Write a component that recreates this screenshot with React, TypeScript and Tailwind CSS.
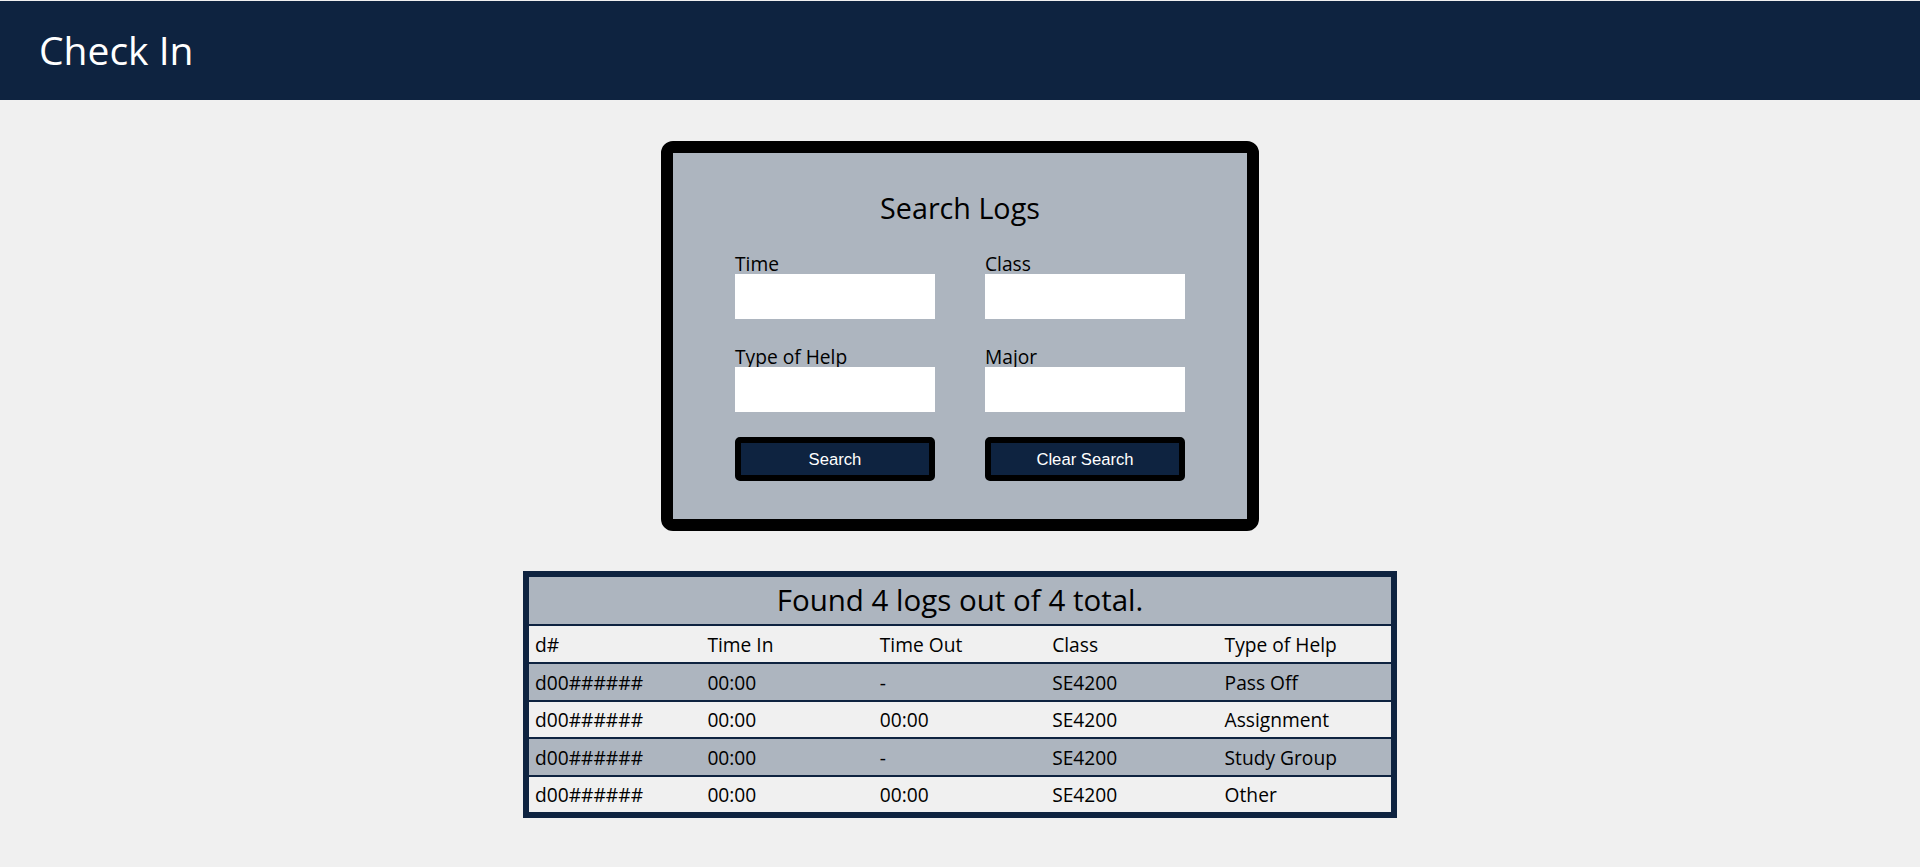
const logs = [
	{ id: "d00######", timeIn: "00:00", timeOut: "-", course: "SE4200", help: "Pass Off" },
	{ id: "d00######", timeIn: "00:00", timeOut: "00:00", course: "SE4200", help: "Assignment" },
	{ id: "d00######", timeIn: "00:00", timeOut: "-", course: "SE4200", help: "Study Group" },
	{ id: "d00######", timeIn: "00:00", timeOut: "00:00", course: "SE4200", help: "Other" },
];

const fields = [
	{ label: "Time" },
	{ label: "Class" },
	{ label: "Type of Help" },
	{ label: "Major" },
];

function Field({ label }: { label: string }) {
	return (
		<label className="flex flex-col">
			<span className="h-[21px] leading-[21px]">{label}</span>
			<input type="text" className="h-[45px] w-[200px] bg-white outline-none px-2" />
		</label>
	);
}

function SearchPanel() {
	return (
		<section className="mx-auto mt-[41px] w-[598px] rounded-[12px] border-[12px] border-black bg-[#adb5bf] pt-[38px] pb-[38px]">
			<h2 className="h-[34px] text-center text-[28.7px] leading-[34px]">Search Logs</h2>
			<div className="mx-auto mt-[28px] grid w-[450px] grid-cols-2 gap-x-[50px] gap-y-[27px]">
				{fields.map((f) => (
					<Field key={f.label} label={f.label} />
				))}
			</div>
			<div className="mx-auto mt-[25px] grid w-[450px] grid-cols-2 gap-x-[50px]">
				<button className="h-[44px] rounded-[5px] border-[6px] border-black bg-[#0e2340] text-[16.67px] text-white font-['Liberation_Sans',Arial,sans-serif]">
					Search
				</button>
				<button className="h-[44px] rounded-[5px] border-[6px] border-black bg-[#0e2340] text-[16.67px] text-white font-['Liberation_Sans',Arial,sans-serif]">
					Clear Search
				</button>
			</div>
		</section>
	);
}

function LogsTable() {
	const row = "grid grid-cols-5 items-center border-t-2 border-[#0e2340] pt-[3px]";
	return (
		<section className="mx-auto mt-[40px] w-[874px] border-[6px] border-[#0e2340]">
			<div className="flex h-[47px] items-center justify-center bg-[#adb5bf] text-[29.5px]">
				Found {logs.length} logs out of {logs.length} total.
			</div>
			<div className={`${row} h-[38px] bg-[#f0f0f0]`}>
				<span className="pl-[6px]">d#</span>
				<span className="pl-[6px]">Time In</span>
				<span className="pl-[6px]">Time Out</span>
				<span className="pl-[6px]">Class</span>
				<span className="pl-[6px]">Type of Help</span>
			</div>
			{logs.map((log, index) => (
				<div
					key={index}
					className={`${row} h-[37.5px] ${index % 2 === 0 ? "bg-[#adb5bf]" : "bg-[#f0f0f0]"}`}
				>
					<span className="pl-[6px]">{log.id}</span>
					<span className="pl-[6px]">{log.timeIn}</span>
					<span className="pl-[6px]">{log.timeOut}</span>
					<span className="pl-[6px]">{log.course}</span>
					<span className="pl-[6px]">{log.help}</span>
				</div>
			))}
		</section>
	);
}

export default function App() {
	return (
		<div className="min-h-screen bg-[#f0f0f0] pt-px text-[19.2px] text-black font-['Open_Sans',sans-serif]">
			<header className="flex h-[99px] items-center bg-[#0e2340] pl-[39px]">
				<h1 className="text-[39px] text-white">Check In</h1>
			</header>
			<SearchPanel />
			<LogsTable />
		</div>
	);
}
